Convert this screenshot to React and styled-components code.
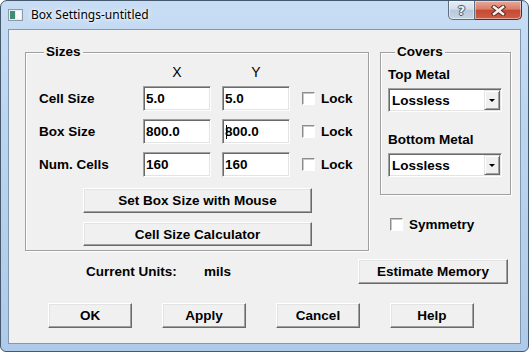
import { Fragment } from "react";
import styled, { createGlobalStyle } from "styled-components";

const GlobalStyle = createGlobalStyle`
  body {
    margin: 0;
    background: #ffffff;
  }
`;

const Window = styled.div`
  width: 529px;
  height: 352px;
  box-sizing: border-box;
  border: 1px solid #46586e;
  border-radius: 7px 7px 6px 6px;
  background: linear-gradient(180deg, #c7ddf4 0%, #bcd5ef 35%, #afcae8 100%);
  display: flex;
  flex-direction: column;
  overflow: hidden;
  font-family: "Liberation Sans", Arial, sans-serif;
`;

const TitleBar = styled.div`
  height: 28px;
  display: flex;
  align-items: flex-start;
`;

const WindowIcon = styled.svg`
  margin: 8px 0 0 7px;
  flex: none;
`;

const Title = styled.div`
  margin-left: 8px;
  line-height: 28px;
  font-family: "Noto Sans", "Open Sans", sans-serif;
  font-size: 12px;
  color: #000;
  text-shadow: 0 0 6px #fff, 0 0 3px #fff;
`;

const Controls = styled.div`
  margin-left: auto;
  margin-right: 6px;
  display: flex;
`;

const CaptionButton = styled.div`
  box-sizing: border-box;
  height: 19px;
  width: ${(p) => p.$width}px;
  display: flex;
  align-items: center;
  justify-content: center;
  border: 1px solid ${(p) => (p.$close ? "#5c2a26" : "#5e6d80")};
  border-top: none;
  border-left: ${(p) => (p.$close ? "none" : "1px solid #5e6d80")};
  border-radius: ${(p) => (p.$close ? "0 0 5px 0" : "0 0 0 5px")};
  background: ${(p) =>
    p.$close
      ? "linear-gradient(180deg, #e9a899 0%, #db7d69 45%, #c44a33 52%, #cf5d45 100%)"
      : "linear-gradient(180deg, #e6edf5 0%, #d3deea 45%, #b9c9da 52%, #c7d5e4 100%)"};
  box-shadow: inset 0 0 0 1px rgba(255, 255, 255, 0.45);
`;

const HelpGlyph = styled.span`
  font-family: "DejaVu Sans", sans-serif;
  font-weight: bold;
  font-size: 13px;
  line-height: 1;
  color: #e9eef4;
  text-shadow: 1px 0 0 #4b5868, -1px 0 0 #4b5868, 0 1px 0 #4b5868, 0 -1px 0 #4b5868;
`;

const Client = styled.div`
  flex: 1;
  margin: 0 7px 7px 7px;
  border: 1px solid #8198b3;
  background: #f0f0f0;
  padding: 15px 0 0 16px;
  display: flex;
  flex-direction: column;
  font-size: 13.5px;
  font-weight: bold;
  color: #000;
`;

const TopRow = styled.div`
  display: flex;
  align-items: flex-start;
`;

const Group = styled.fieldset`
  box-sizing: border-box;
  width: ${(p) => p.$width}px;
  margin: 0 ${(p) => p.$gap || 0}px 0 0;
  padding: ${(p) => p.$pad};
  border: 1px solid #a0a0a0;
  box-shadow: inset 1px 1px 0 #fff, 1px 1px 0 #fff;
  min-inline-size: 0;
`;

const Legend = styled.legend`
  margin-left: ${(p) => p.$indent}px;
  padding: 0 2px;
  line-height: 14px;
  background: #f0f0f0;
`;

const SizesGrid = styled.div`
  display: grid;
  grid-template-columns: 93px 68px 68px auto;
  grid-template-rows: 13px 25px 25px 25px;
  column-gap: 11px;
  row-gap: 8px;
  align-items: center;
`;

const ColHead = styled.div`
  text-align: center;
  line-height: 13px;
  margin-top: 2px;
  font-weight: normal;
  font-size: 14px;
`;

const Label = styled.div`
  line-height: 14px;
  white-space: nowrap;
`;

const TextField = styled.div`
  position: relative;
  box-sizing: border-box;
  height: 25px;
  width: ${(p) => p.$width || 68}px;
  display: flex;
  align-items: center;
  padding-left: 2px;
  background: #fff;
  border-style: solid;
  border-width: 1px;
  border-color: #a0a0a0 #fff #fff #a0a0a0;
  box-shadow: inset 1px 1px 0 #696969, inset -1px -1px 0 #e3e3e3;

  ${(p) =>
    p.$caret &&
    `
    &::before {
      content: "";
      position: absolute;
      left: 3px;
      top: 5px;
      width: 1px;
      height: 14px;
      background: #000;
    }
  `}
`;

const CheckRow = styled.label`
  display: flex;
  align-items: center;
  gap: 6px;
  margin-left: ${(p) => p.$indent || 0}px;
  margin-top: ${(p) => p.$top || 0}px;
  white-space: nowrap;
`;

const CheckBox = styled.span`
  box-sizing: border-box;
  width: 13px;
  height: 13px;
  background: #fff;
  border-style: solid;
  border-width: 1px;
  border-color: #8c8c8c #fff #fff #8c8c8c;
  box-shadow: inset 1px 1px 0 #c8c8c8;
  flex: none;
`;

const ButtonStack = styled.div`
  margin: 11px 0 0 44px;
  display: flex;
  flex-direction: column;
  gap: 9px;
  width: 229px;
`;

const Button = styled.div`
  box-sizing: border-box;
  width: ${(p) => p.$width || 229}px;
  height: ${(p) => p.$height || 25}px;
  display: flex;
  align-items: center;
  justify-content: center;
  background: #f0f0f0;
  border-style: solid;
  border-width: 1px;
  border-color: #fff #696969 #696969 #fff;
  box-shadow: inset -1px -1px 0 #a0a0a0, inset 1px 1px 0 #e3e3e3;
  white-space: nowrap;
  flex: none;
`;

const RightColumn = styled.div`
  display: flex;
  flex-direction: column;
`;

const SelectBox = styled.div`
  box-sizing: border-box;
  width: 114px;
  height: 24px;
  margin-top: 6px;
  display: flex;
  align-items: stretch;
  background: #fff;
  border-style: solid;
  border-width: 1px;
  border-color: #a0a0a0 #fff #fff #a0a0a0;
  box-shadow: inset 1px 1px 0 #696969, inset -1px -1px 0 #e3e3e3;
  padding: 1px 1px 1px 3px;
`;

const SelectText = styled.div`
  flex: 1;
  display: flex;
  align-items: center;
`;

const DropButton = styled.div`
  box-sizing: border-box;
  width: 16px;
  display: flex;
  align-items: center;
  justify-content: center;
  background: #f0f0f0;
  border-style: solid;
  border-width: 1px;
  border-color: #e3e3e3 #696969 #696969 #e3e3e3;
  box-shadow: inset 1px 1px 0 #fff, inset -1px -1px 0 #a0a0a0;

  &::after {
    content: "";
    border-left: 3px solid transparent;
    border-right: 3px solid transparent;
    border-top: 3px solid #000;
  }
`;

const SubLabel = styled(Label)`
  margin-top: ${(p) => p.$top || 0}px;
`;

const InfoRow = styled.div`
  display: flex;
  align-items: center;
  margin-top: 8px;
`;

const UnitsLabel = styled.div`
  margin-left: 61px;
  width: 118px;
`;

const RightButton = styled(Button)`
  margin-left: auto;
  margin-right: 12px;
`;

const ButtonRow = styled.div`
  display: flex;
  gap: 30px;
  margin: 19px 0 0 23px;
`;

function CloseGlyph() {
  return (
    <svg width="15" height="11" viewBox="0 0 15 11">
      <path d="M3 2 L12 9 M12 2 L3 9" stroke="#5a2a24" strokeWidth="4.5" strokeLinecap="square" />
      <path d="M3 2 L12 9 M12 2 L3 9" stroke="#f6f0ee" strokeWidth="2.5" strokeLinecap="square" />
    </svg>
  );
}

function Select({ value }) {
  return (
    <SelectBox>
      <SelectText>{value}</SelectText>
      <DropButton />
    </SelectBox>
  );
}

const sizeRows = [
  { label: "Cell Size", x: "5.0", y: "5.0" },
  { label: "Box Size", x: "800.0", y: "800.0", caret: true },
  { label: "Num. Cells", x: "160", y: "160" },
];

export default function App() {
  return (
    <>
      <GlobalStyle />
      <Window>
        <TitleBar>
          <WindowIcon width="15" height="12" viewBox="0 0 15 12">
            <rect x="0.5" y="0.5" width="14" height="11" fill="#e8edf1" stroke="#8d9aa6" />
            <rect x="2" y="2" width="5" height="8" fill="#3f8c7b" />
            <rect x="8" y="2" width="5" height="8" fill="#f7f9fa" />
          </WindowIcon>
          <Title>Box Settings-untitled</Title>
          <Controls>
            <CaptionButton $width={27}>
              <HelpGlyph>?</HelpGlyph>
            </CaptionButton>
            <CaptionButton $width={47} $close>
              <CloseGlyph />
            </CaptionButton>
          </Controls>
        </TitleBar>

        <Client>
          <TopRow>
            <Group $width={344} $gap={11} $pad="6px 0 4px 13px">
              <Legend $indent={5}>Sizes</Legend>
              <SizesGrid>
                <span />
                <ColHead>X</ColHead>
                <ColHead>Y</ColHead>
                <span />
                {sizeRows.map((row) => (
                  <Fragment key={row.label}>
                    <Label>{row.label}</Label>
                    <TextField>{row.x}</TextField>
                    <TextField $caret={row.caret}>{row.y}</TextField>
                    <CheckRow $indent={1}>
                      <CheckBox />
                      Lock
                    </CheckRow>
                  </Fragment>
                ))}
              </SizesGrid>
              <ButtonStack>
                <Button>Set Box Size with Mouse</Button>
                <Button $height={24}>Cell Size Calculator</Button>
              </ButtonStack>
            </Group>

            <RightColumn>
              <Group $width={131} $pad="9px 0 17px 7px">
                <Legend $indent={7}>Covers</Legend>
                <SubLabel>Top Metal</SubLabel>
                <Select value="Lossless" />
                <SubLabel $top={21}>Bottom Metal</SubLabel>
                <Select value="Lossless" />
              </Group>
              <CheckRow $indent={10} $top={22}>
                <CheckBox />
                Symmetry
              </CheckRow>
            </RightColumn>
          </TopRow>

          <InfoRow>
            <UnitsLabel>Current Units:</UnitsLabel>
            <span>mils</span>
            <RightButton $width={150}>Estimate Memory</RightButton>
          </InfoRow>

          <ButtonRow>
            <Button $width={84}>OK</Button>
            <Button $width={84}>Apply</Button>
            <Button $width={84}>Cancel</Button>
            <Button $width={84}>Help</Button>
          </ButtonRow>
        </Client>
      </Window>
    </>
  );
}
